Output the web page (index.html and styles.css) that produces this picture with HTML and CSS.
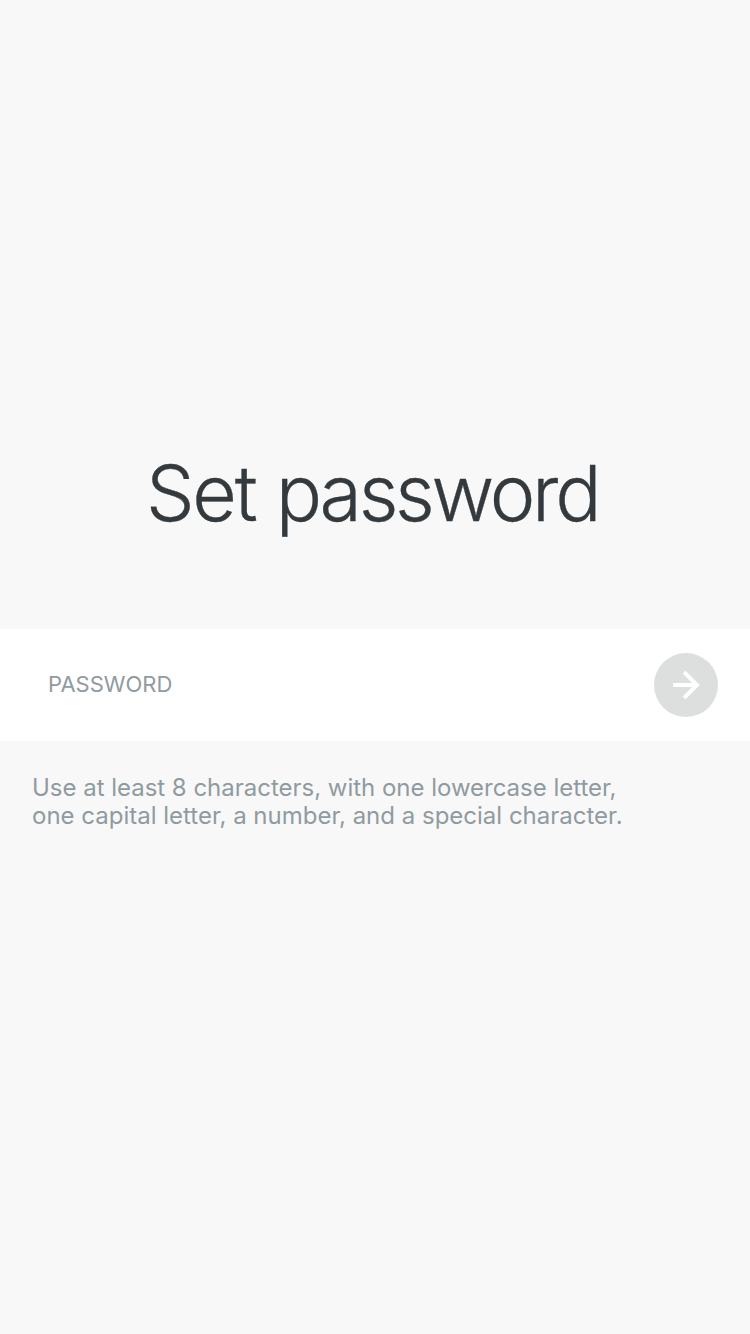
FILE: index.html
```html
<!DOCTYPE html>
<html lang="en">
<head>
<meta charset="utf-8">
<title>Set password</title>
<link rel="stylesheet" href="styles.css">
</head>
<body>
<main class="screen">
  <h1 class="title">Set <span class="title-end">password</span></h1>
  <form class="field">
    <label class="field-label">PASSWORD</label>
    <button class="submit" type="button" aria-label="Continue">
      <svg class="arrow" viewBox="0 0 64 64"><path d="M19 32H43M30.1 19.1L43 32L30.1 44.9"/></svg>
    </button>
  </form>
  <p class="hint"><span class="line first">Use at least 8 characters, with one lowercase letter,</span><span class="line">one capital letter, a number, and a special character.</span></p>
</main>
</body>
</html>
```

FILE: styles.css
```css
* { box-sizing: border-box; }
body { margin: 0; background: #f8f8f8; font-family: Inter, sans-serif; }
.screen { display: flex; flex-direction: column; min-height: 1334px; padding-top: 443px; }
.title { margin: 0; height: 186px; padding-left: 146px; font-size: 77px; line-height: 100px; font-weight: 300; letter-spacing: -2.3px; word-spacing: 1px; color: #33393c; white-space: nowrap; -webkit-text-stroke: 0.3px #33393c; }
.title-end { letter-spacing: -3.25px; }
.field { display: flex; align-items: center; justify-content: space-between; height: 112px; padding: 0 32px 0 48px; background: #fff; }
.field-label { padding-bottom: 2px; font-size: 22px; line-height: 28px; color: #8f9ba1; }
.submit { width: 64px; height: 64px; padding: 0; border: 0; border-radius: 50%; background: #dddfde; }
.arrow { display: block; width: 64px; height: 64px; fill: none; stroke: #fff; stroke-width: 4; }
.hint { margin: 0; padding: 33px 32px 0; font-size: 24px; line-height: 28px; color: #8f9ba1; }
.line { display: block; width: max-content; }
.first { letter-spacing: -0.02px; }
```
